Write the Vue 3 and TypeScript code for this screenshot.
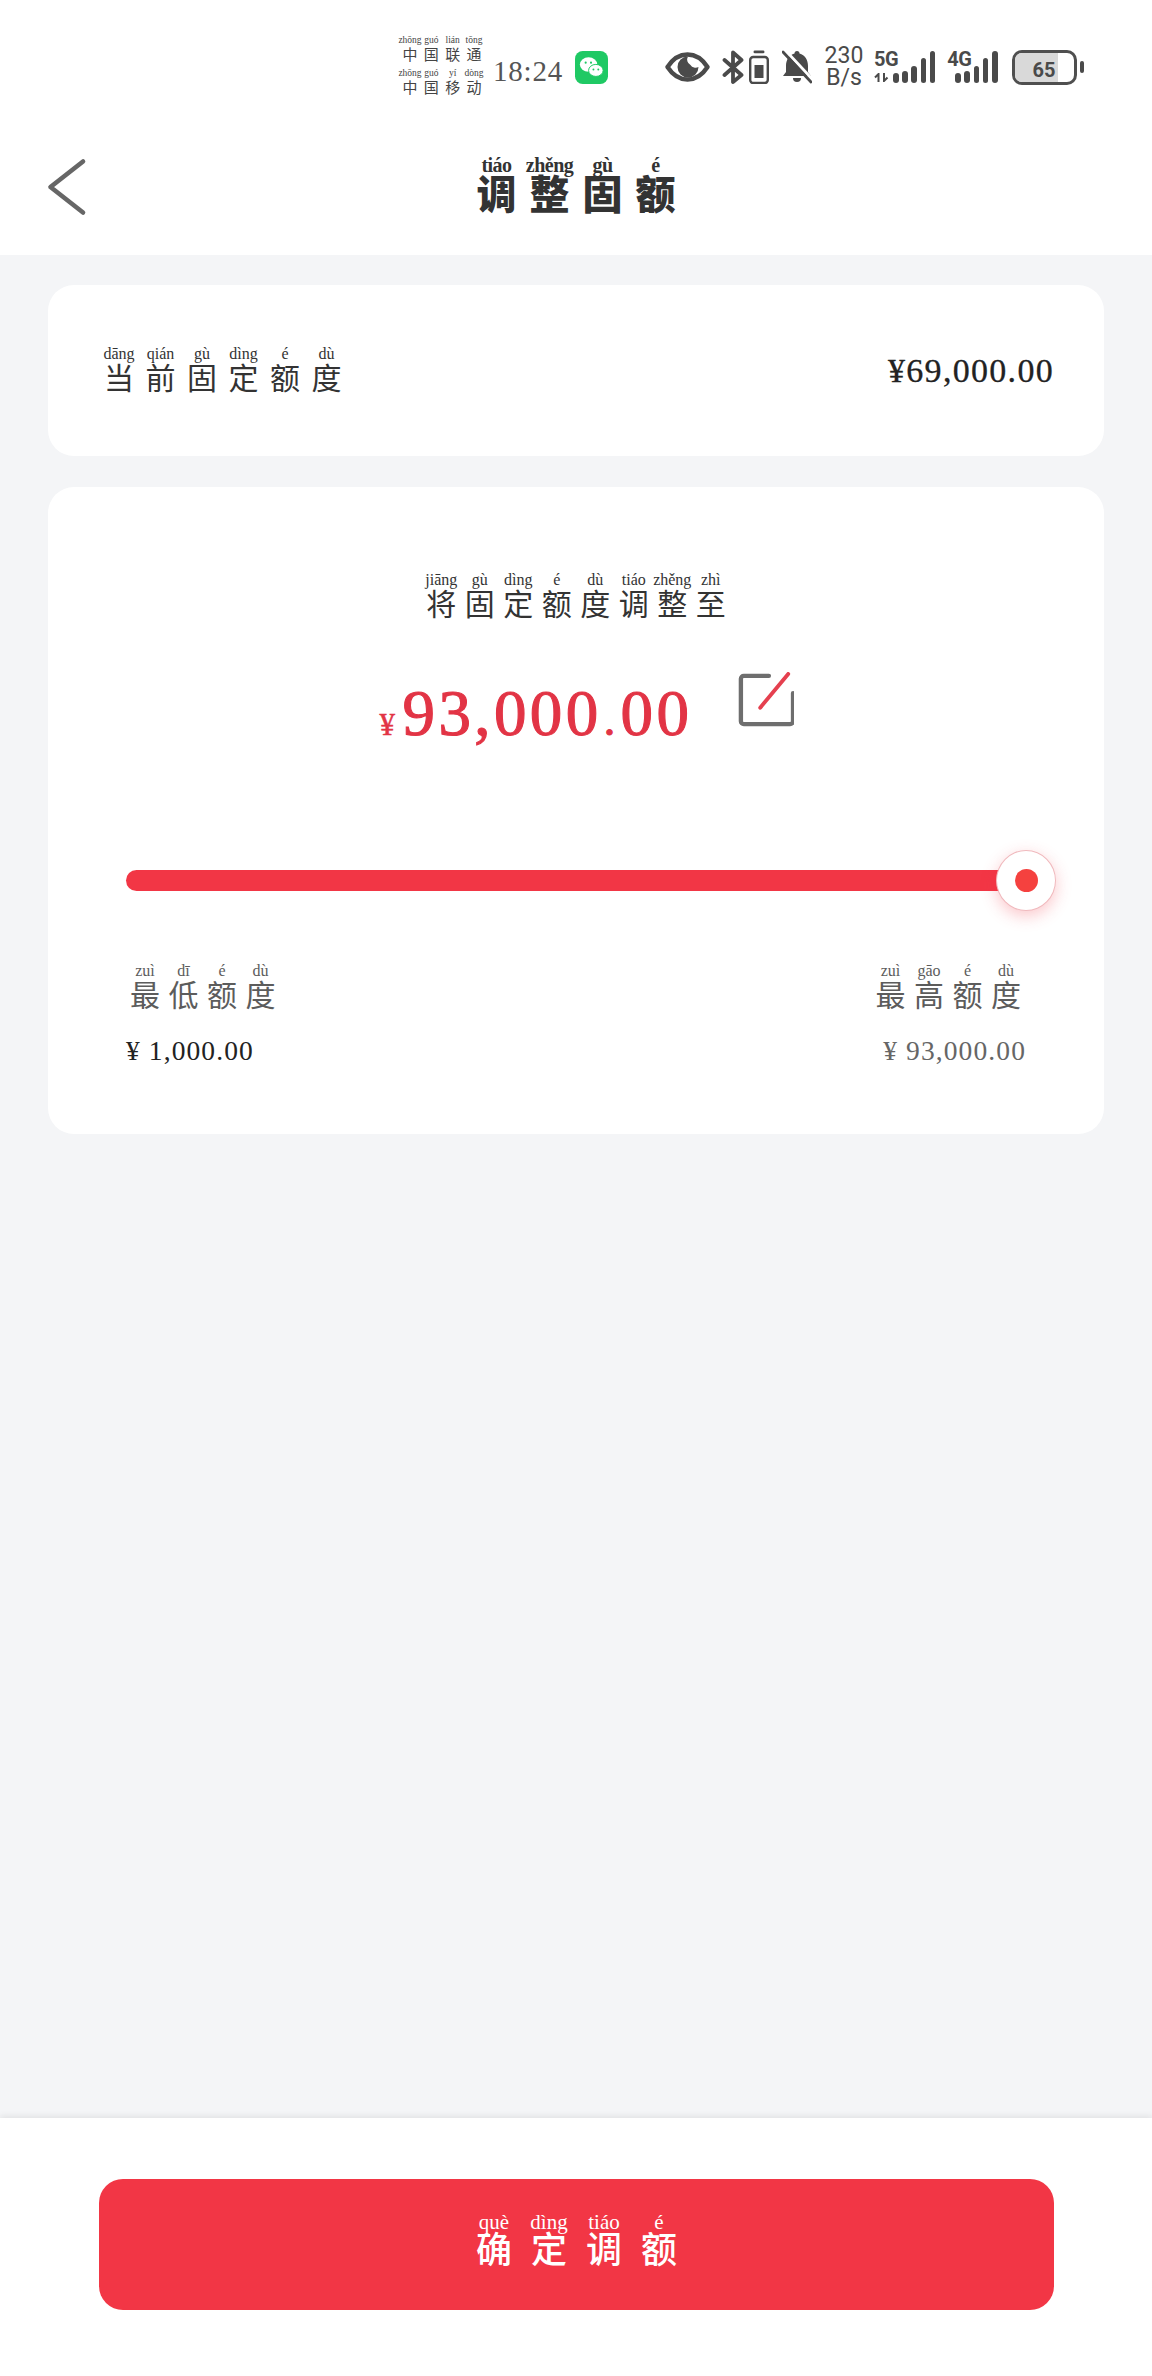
<script setup lang="ts">
type Glyph = [string, string]

const pairs = (hanzi: string, pinyin: string): Glyph[] => {
  const py = pinyin.split(' ')
  return hanzi.split('').map((c, i) => [c, py[i]] as Glyph)
}

const carrier1 = pairs('中国联通', 'zhōng guó lián tōng')
const carrier2 = pairs('中国移动', 'zhōng guó yí dòng')
const title = pairs('调整固额', 'tiáo zhěng gù é')
const current = pairs('当前固定额度', 'dāng qián gù dìng é dù')
const adjust = pairs('将固定额度调整至', 'jiāng gù dìng é dù tiáo zhěng zhì')
const lowest = pairs('最低额度', 'zuì dī é dù')
const highest = pairs('最高额度', 'zuì gāo é dù')
const confirm = pairs('确定调额', 'què dìng tiáo é')

const signal = [10, 12, 17, 25, 32]
</script>

<template>
  <div class="page">
    <header class="top">
      <div class="status">
        <div class="carriers">
          <div class="py-row tiny"><span v-for="g in carrier1" :key="g[0]" class="py"><i>{{ g[1] }}</i><b>{{ g[0] }}</b></span></div>
          <div class="py-row tiny"><span v-for="g in carrier2" :key="g[0]" class="py"><i>{{ g[1] }}</i><b>{{ g[0] }}</b></span></div>
        </div>
        <span class="clock">18:24</span>
        <svg class="wechat" width="33" height="33" viewBox="0 0 34 34">
          <rect width="34" height="34" rx="8" fill="#1fc964" />
          <ellipse cx="14" cy="14" rx="9" ry="7.5" fill="#fff" />
          <ellipse cx="21.5" cy="20" rx="7.5" ry="6.2" fill="#fff" stroke="#1fc964" stroke-width="1" />
          <circle cx="11" cy="12" r="1.1" fill="#1fc964" />
          <circle cx="16.5" cy="12" r="1.1" fill="#1fc964" />
          <circle cx="19" cy="19" r="1" fill="#1fc964" />
          <circle cx="24" cy="19" r="1" fill="#1fc964" />
        </svg>
        <svg class="eye" width="45" height="30" viewBox="0 0 45 30">
          <path d="M2.5 15C8 6.5 15 2.5 22.5 2.5S37 6.5 42.5 15C37 23.5 30 27.5 22.5 27.5S8 23.5 2.5 15z" fill="none" stroke="#4a4a4a" stroke-width="4.4" stroke-linejoin="round" />
          <path d="M23 4.5a10.5 10.5 0 1 0 10.5 10.5 6 6 0 0 1-8-2 6 6 0 0 1-2.5-8.500z" fill="#4a4a4a" />
        </svg>
        <svg class="bt" width="22" height="34" viewBox="0 0 22 34">
          <path d="M2.500 10L19.500 25L11 32V2.500L19.500 10L2.500 25" fill="none" stroke="#4a4a4a" stroke-width="3.8" stroke-linecap="round" stroke-linejoin="round" />
        </svg>
        <svg class="cell" width="20" height="34" viewBox="0 0 20 34">
          <rect x="4.500" y="0.500" width="11" height="2.800" rx="1.400" fill="#4a4a4a" />
          <rect x="1.200" y="7" width="17.600" height="26" rx="3" fill="none" stroke="#4a4a4a" stroke-width="2.400" />
          <rect x="5.500" y="15" width="9" height="13" fill="#4a4a4a" />
        </svg>
        <svg class="bell" width="30" height="34" viewBox="0 0 30 34">
          <path d="M15 1a2.500 2.500 0 0 1 2.500 2.500C23 5 26 10 26 16v6l3 4H1l3-4v-6C4 10 7 5 12.500 3.500A2.500 2.500 0 0 1 15 1z" fill="#4a4a4a" />
          <path d="M11 28h8a4 4 0 0 1-8 0z" fill="#4a4a4a" />
          <path d="M3 0L31 30" stroke="#fff" stroke-width="3" />
          <path d="M1 2l28 30" stroke="#4a4a4a" stroke-width="2.800" stroke-linecap="round" />
        </svg>
        <span class="speed"><span>230</span><span>B/s</span></span>
        <div class="net five">
          <span class="gen">5G</span>
          <svg class="arrows" width="15" height="9" viewBox="0 0 15 9">
            <path d="M4.500 9V1L1 4.500M10 0v8l3.500-3.500" fill="none" stroke="#4a4a4a" stroke-width="2" />
          </svg>
          <div class="bars"><i v-for="h in signal" :key="h" class="bar" :style="{ height: h + 'px' }"></i></div>
        </div>
        <div class="net four">
          <span class="gen">4G</span>
          <div class="bars"><i v-for="h in signal" :key="h" class="bar" :style="{ height: h + 'px' }"></i></div>
        </div>
        <div class="battery">
          <div class="batt-body"><div class="batt-fill"></div><span>65</span></div>
          <i class="batt-tip"></i>
        </div>
      </div>
      <div class="nav">
        <svg class="back" width="40" height="58" viewBox="0 0 40 58">
          <path d="M36 3.500L3.500 29L36 54.500" fill="none" stroke="#666" stroke-width="4.600" stroke-linecap="round" stroke-linejoin="round" />
        </svg>
        <h1 class="py-row title"><span v-for="g in title" :key="g[0]" class="py"><i>{{ g[1] }}</i><b>{{ g[0] }}</b></span></h1>
      </div>
    </header>

    <main class="content">
      <section class="card current">
        <div class="py-row label"><span v-for="g in current" :key="g[0]" class="py"><i>{{ g[1] }}</i><b>{{ g[0] }}</b></span></div>
        <span class="current-amt">¥69,000.00</span>
      </section>

      <section class="card adjust">
        <div class="py-row label center"><span v-for="g in adjust" :key="g[0]" class="py"><i>{{ g[1] }}</i><b>{{ g[0] }}</b></span></div>
        <div class="amount-row">
          <div class="amount"><span class="yen">¥</span>93,000<span class="dot">.</span>00</div>
          <svg class="edit" width="58" height="58" viewBox="0 0 58 58">
            <path d="M33 6H7a3 3 0 0 0-3 3v44a3 3 0 0 0 3 3h48a3 3 0 0 0 3-3V24" transform="translate(-1 -2)" fill="none" stroke="#6e6e6e" stroke-width="4.500" stroke-linecap="round" />
            <path d="M23 37L52 2" fill="none" stroke="#e5404f" stroke-width="4" stroke-linecap="round" />
          </svg>
        </div>
        <div class="slider">
          <div class="track"></div>
          <div class="thumb"><i></i></div>
        </div>
        <div class="limits">
          <div class="limit">
            <div class="py-row label gray"><span v-for="g in lowest" :key="g[0]" class="py"><i>{{ g[1] }}</i><b>{{ g[0] }}</b></span></div>
            <span class="limit-amt">¥ 1,000.00</span>
          </div>
          <div class="limit right">
            <div class="py-row label gray"><span v-for="g in highest" :key="g[0]" class="py"><i>{{ g[1] }}</i><b>{{ g[0] }}</b></span></div>
            <span class="limit-amt gray-amt">¥ 93,000.00</span>
          </div>
        </div>
      </section>
    </main>

    <footer class="bottom">
      <button class="confirm">
        <span class="py-row btn-label"><span v-for="g in confirm" :key="g[0]" class="py"><i>{{ g[1] }}</i><b>{{ g[0] }}</b></span></span>
      </button>
    </footer>
  </div>
</template>

<style>
html,
body {
  margin: 0;
  background: #f4f5f7;
}
</style>

<style scoped>
.page {
  width: 1152px;
  height: 2376px;
  display: flex;
  flex-direction: column;
  background: #f4f5f7;
  font-family: "Liberation Serif", "Noto Sans CJK SC", serif;
  color: #222;
  overflow: hidden;
}

.top {
  height: 255px;
  background: #fff;
  flex: none;
}

.status {
  height: 128px;
  box-sizing: border-box;
  padding: 6px 0 0 400px;
  display: flex;
  align-items: center;
}

/* pinyin over each hanzi */
.py-row {
  display: flex;
  margin: 0;
  font-weight: 400;
}
.py {
  display: flex;
  flex-direction: column;
  align-items: center;
}
.py i {
  font-style: normal;
  font-family: "Liberation Serif", serif;
  white-space: nowrap;
  line-height: 1;
}
.py b {
  font-weight: 400;
  font-family: "Noto Sans CJK SC", sans-serif;
  line-height: 1;
}

.carriers {
  width: 84px;
  margin-top: 4px;
  color: #444;
}
.tiny {
  justify-content: space-between;
  height: 33px;
}
.tiny .py {
  width: 20px;
}
.tiny .py i {
  font-size: 9.500px;
  height: 10px;
}
.tiny .py b {
  font-size: 15px;
}

.clock {
  margin: 9px 0 0 9px;
  width: 82px;
  font-size: 29px;
  color: #555;
  letter-spacing: 0.800px;
}
.wechat {
  margin-right: 57px;
}
.eye {
  margin-right: 12px;
}
.bt {
  margin-right: 5px;
}
.cell {
  margin-right: 13px;
}
.bell {
  margin-right: 14px;
}
.speed {
  display: flex;
  flex-direction: column;
  width: 36px;
  font-family: Roboto, sans-serif;
  font-size: 23px;
  line-height: 22px;
  color: #4a4a4a;
  text-align: center;
  margin-right: 12px;
  white-space: nowrap;
  align-items: center;
}

.net {
  position: relative;
  height: 32px;
  display: flex;
  align-items: flex-end;
  color: #4a4a4a;
  font-family: Roboto, sans-serif;
}
.gen {
  position: absolute;
  left: 0;
  top: -2px;
  font-size: 20px;
  font-weight: 700;
  line-height: 20px;
  letter-spacing: -0.500px;
}
.arrows {
  margin: 0 4px 1px 0;
}
.five {
  margin-right: 12px;
}
.four {
  margin-right: 14px;
  padding-left: 8px;
}
.bars {
  display: flex;
  align-items: flex-end;
  gap: 3.700px;
}
.bar {
  width: 5.500px;
  border-radius: 3px;
  background: #4a4a4a;
}

.battery {
  display: flex;
  align-items: center;
  gap: 3px;
}
.batt-body {
  position: relative;
  width: 65px;
  height: 35px;
  box-sizing: border-box;
  border: 3px solid #4f4f4f;
  border-radius: 10px;
  overflow: hidden;
  font-family: Roboto, sans-serif;
  font-weight: 700;
  font-size: 20px;
  color: #4a4a4a;
  text-align: center;
  line-height: 35px;
}
.batt-fill {
  position: absolute;
  left: 0;
  top: 0;
  bottom: 0;
  width: 43px;
  background: #d9d9d9;
}
.batt-body span {
  position: relative;
}
.batt-tip {
  width: 4px;
  height: 12px;
  border-radius: 2px;
  background: #4a4a4a;
}

.nav {
  position: relative;
  height: 127px;
  display: flex;
  justify-content: center;
}
.back {
  position: absolute;
  left: 47px;
  top: 30px;
}
.title {
  height: 62px;
  padding-top: 27px;
  gap: 7px;
  color: #333;
}
.title .py {
  width: 46px;
}
.title .py i {
  font-size: 20px;
  font-weight: 700;
  height: 17px;
  letter-spacing: -0.500px;
}
.title .py b {
  font-size: 40px;
  font-weight: 900;
}

.content {
  flex: 1;
  padding: 30px 48px 0;
  display: flex;
  flex-direction: column;
  gap: 31px;
}
.card {
  background: #fff;
  border-radius: 26px;
}
.current {
  height: 171px;
  box-sizing: border-box;
  padding: 0 50px 0 56px;
  display: flex;
  align-items: center;
  justify-content: space-between;
}
.label {
  gap: 11px;
  color: #333;
}
.label .py {
  width: 30px;
}
.label .py i {
  font-size: 16px;
  height: 15px;
}
.label .py b {
  font-size: 30px;
}
.current .label {
  gap: 11.500px;
  margin-top: -4px;
}
.current-amt {
  font-size: 34px;
  letter-spacing: 1.300px;
  color: #222;
  -webkit-text-stroke: 0.300px #222;
}

.adjust {
  height: 647px;
  box-sizing: border-box;
  padding: 85px 78px 0;
  display: flex;
  flex-direction: column;
}
.center {
  justify-content: center;
}
.adjust .center {
  gap: 8.500px;
}
.amount-row {
  display: flex;
  justify-content: center;
  align-items: flex-start;
  gap: 46px;
  padding-left: 22px;
  margin-top: 48px;
  height: 96px;
}
.amount {
  font-size: 65px;
  line-height: 96px;
  letter-spacing: 3.400px;
  color: #e23445;
  -webkit-text-stroke: 1.100px #e23445;
  white-space: nowrap;
}
.yen {
  font-size: 31px;
  margin-right: 4px;
  -webkit-text-stroke: 0.500px #e23445;
}
.dot {
  font-size: 46px;
  margin: 0 2px;
}
.edit {
  margin: 7px 0 -2px;
  width: 56px;
  height: 56px;
}
.slider {
  position: relative;
  margin-top: 109px;
  height: 21px;
}
.track {
  height: 21px;
  width: 880px;
  border-radius: 11px 0 0 11px;
  background: #f23645;
}
.thumb {
  position: absolute;
  left: 870px;
  top: -20px;
  width: 60px;
  height: 61px;
  box-sizing: border-box;
  display: flex;
  align-items: center;
  justify-content: center;
  border-radius: 50%;
  background: #fff;
  border: 1px solid #f0b9bd;
  box-shadow: 0 5px 16px rgba(242, 54, 69, 0.28);
}
.thumb i {
  width: 23px;
  height: 23px;
  border-radius: 50%;
  background: #f5413f;
}
.limits {
  display: flex;
  justify-content: space-between;
  margin-top: 72px;
}
.limit {
  display: flex;
  flex-direction: column;
}
.limit.right {
  align-items: flex-end;
}
.gray {
  color: #5c5c5c;
  gap: 8.500px;
  margin-left: 4px;
}
.right .gray {
  margin: 0 5px 0 0;
}
.limit-amt {
  margin-top: 28px;
  font-size: 27.500px;
  line-height: 30px;
  letter-spacing: 1.100px;
  color: #222;
}
.gray-amt {
  color: #666;
}

.bottom {
  flex: none;
  height: 258px;
  box-sizing: border-box;
  padding: 61px 98px 0 99px;
  background: #fff;
  box-shadow: 0 -2px 6px rgba(0, 0, 0, 0.08);
}
.confirm {
  display: flex;
  align-items: center;
  justify-content: center;
  width: 955px;
  height: 131px;
  padding: 0 0 12px;
  border: 0;
  border-radius: 24px;
  background: #f23645;
  color: #fff;
  font-family: inherit;
}
.btn-label {
  gap: 18px;
}
.btn-label .py {
  width: 37px;
}
.btn-label .py i {
  font-size: 21px;
  height: 17px;
}
.btn-label .py b {
  font-size: 36px;
  font-weight: 500;
}
</style>
